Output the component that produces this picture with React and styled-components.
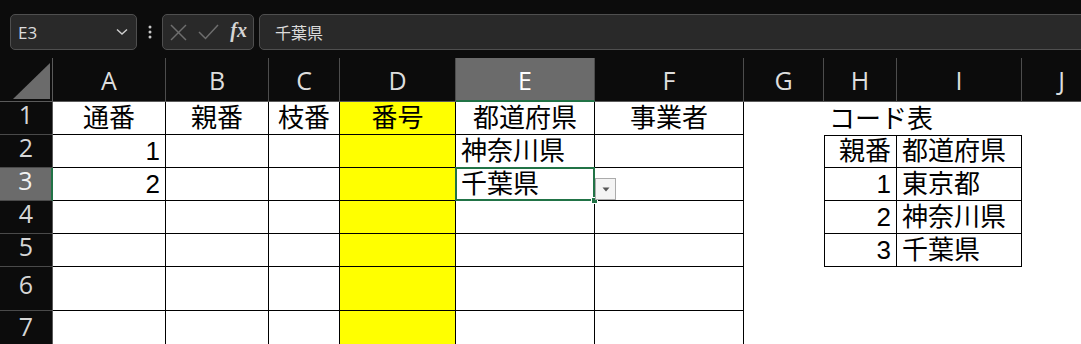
import styled, { createGlobalStyle, css } from "styled-components";

const GlobalStyle = createGlobalStyle`
  html, body {
    margin: 0;
    padding: 0;
    background: #0c0c0c;
    overflow: hidden;
  }
`;

const UI_FONT = `"Segoe UI", "Open Sans", "Noto Sans CJK JP", sans-serif`;
const CELL_FONT = `"Liberation Sans", "Noto Sans CJK JP", sans-serif`;

const Page = styled.div`
  width: 1081px;
  height: 344px;
  overflow: hidden;
  background: #0c0c0c;
`;

// ---- formula bar ----
const Toolbar = styled.div`
  height: 58px;
  box-sizing: border-box;
  padding: 14px 0 0 10px;
  display: flex;
  align-items: flex-start;
`;

const Box = styled.div`
  height: 36px;
  box-sizing: border-box;
  background: #292929;
  border: 1px solid #4f4f4f;
  border-radius: 5px;
  display: flex;
  align-items: center;
  color: #dcdcdc;
  font-family: ${UI_FONT};
`;

const NameBox = styled(Box)`
  width: 127px;
  padding: 0 8px 0 7px;
  justify-content: space-between;
  font-size: 17px;
`;

const Dots = styled.div`
  width: 25px;
  height: 36px;
  display: flex;
  align-items: center;
  justify-content: center;
`;

const FxBox = styled(Box)`
  width: 92px;
  padding: 0 6px 0 7px;
  justify-content: space-between;
`;

const Fx = styled.span`
  font-family: "Liberation Serif", serif;
  font-style: italic;
  font-weight: bold;
  font-size: 20px;
  color: #d4d4d4;
  margin-top: -3px;
`;

const FormulaInput = styled(Box)`
  flex: 1;
  margin-left: 5px;
  margin-right: -12px;
  padding-left: 15px;
  font-size: 16px;
`;

// ---- sheet grid ----
const COL_W = [53, 113, 103, 71, 116, 139, 149, 80, 73, 125, 80];
const ROW_H = [44, 33, 33, 33, 33, 33, 44, 40];

const Sheet = styled.div`
  display: grid;
  grid-template-columns: ${COL_W.map((w) => `${w}px`).join(" ")} 1fr;
  grid-template-rows: ${ROW_H.map((h) => `${h}px`).join(" ")};
`;

const Corner = styled.div`
  background: #0c0c0c;
  border-right: 1px solid #5a5a5a;
  border-bottom: 1px solid #5a5a5a;
  display: flex;
  align-items: flex-end;
  justify-content: flex-end;
  padding: 0 2px 2px 0;
`;

const ColHeader = styled.div`
  box-sizing: border-box;
  background: ${(p) => (p.$active ? "#6b6b6b" : "#0c0c0c")};
  border-right: 1px solid #4d4d4d;
  border-bottom: ${(p) => (p.$active ? "2px solid #217346" : "1px solid #5a5a5a")};
  color: ${(p) => (p.$active ? "#ffffff" : "#dedede")};
  font-family: ${UI_FONT};
  font-size: 25px;
  display: flex;
  align-items: center;
  justify-content: center;
  padding-top: ${(p) => (p.$active ? "1px" : "0")};
`;

const RowHeader = styled.div`
  box-sizing: border-box;
  background: ${(p) => (p.$active ? "#6b6b6b" : "#0c0c0c")};
  border-right: ${(p) => (p.$active ? "2px solid #217346" : "1px solid #5a5a5a")};
  border-bottom: 1px solid #4a4a4a;
  color: ${(p) => (p.$active ? "#f2f2f2" : "#d6d6d6")};
  font-family: ${UI_FONT};
  font-size: 25px;
  line-height: 1;
  display: flex;
  align-items: center;
  justify-content: center;
  padding-bottom: 8px;
`;

const Cell = styled.div`
  position: relative;
  box-sizing: border-box;
  background: ${(p) => p.$fill || "#ffffff"};
  color: #000;
  font-family: ${CELL_FONT};
  font-size: 26px;
  line-height: 26px;
  white-space: nowrap;
  display: flex;
  align-items: flex-end;
  padding: 0 5px 3px 5px;
  justify-content: ${(p) =>
    p.$align === "right" ? "flex-end" : p.$align === "center" ? "center" : "flex-start"};
  ${(p) => p.$span && css`grid-column: span ${p.$span};`}
  ${(p) =>
    p.$grid &&
    css`
      border-right: 1px solid #000;
      border-bottom: 1px solid #000;
    `}
  ${(p) => p.$left && css`border-left: 1px solid #000;`}
  ${(p) => p.$top && css`border-top: 1px solid #000;`}
  ${(p) =>
    p.$selected &&
    css`
      &::after {
        content: "";
        position: absolute;
        left: -1px;
        top: -1px;
        right: -1px;
        bottom: -1px;
        border: 2px solid #217346;
        pointer-events: none;
      }
    `}
`;

const FillHandle = styled.div`
  position: absolute;
  right: -4px;
  bottom: -4px;
  width: 5px;
  height: 5px;
  background: #217346;
  border: 1px solid #fff;
  z-index: 2;
`;

const DropButton = styled.div`
  position: absolute;
  left: calc(100% + 1px);
  bottom: 0px;
  width: 21px;
  height: 22px;
  box-sizing: border-box;
  background: #f4f4f4;
  border: 1px solid #ababab;
  display: flex;
  align-items: center;
  justify-content: center;
  z-index: 3;
`;

// ---- data ----
const LETTERS = ["A", "B", "C", "D", "E", "F", "G", "H", "I", "J"];

const CONTENT = {
  1: {
    A: ["通番", "center"],
    B: ["親番", "center"],
    C: ["枝番", "center"],
    D: ["番号", "center"],
    E: ["都道府県", "center"],
    F: ["事業者", "center"],
    H: ["コード表", "left", 2],
  },
  2: { A: ["1", "right"], E: ["神奈川県", "left"], H: ["親番", "right"], I: ["都道府県", "left"] },
  3: { A: ["2", "right"], E: ["千葉県", "left"], H: ["1", "right"], I: ["東京都", "left"] },
  4: { H: ["2", "right"], I: ["神奈川県", "left"] },
  5: { H: ["3", "right"], I: ["千葉県", "left"] },
};

const MAIN_COLS = ["A", "B", "C", "D", "E", "F"];

function Chevron() {
  return (
    <svg width="12" height="8" viewBox="0 0 12 8">
      <polyline points="1,1.5 6,6 11,1.5" fill="none" stroke="#cfcfcf" strokeWidth="1.4" />
    </svg>
  );
}

function SheetRow({ r }) {
  const data = CONTENT[r] || {};
  const cells = [];
  let skip = 0;
  LETTERS.forEach((c) => {
    if (skip > 0) {
      skip--;
      return;
    }
    const item = data[c];
    const inMain = MAIN_COLS.includes(c);
    const inCode = (c === "H" || c === "I") && r >= 2 && r <= 5;
    const selected = c === "E" && r === 3;
    if (item && item[2]) skip = item[2] - 1;
    cells.push(
      <Cell
        key={c}
        $grid={inMain || inCode}
        $left={inCode && c === "H"}
        $top={inCode && r === 2}
        $fill={c === "D" ? "#ffff00" : undefined}
        $align={item ? item[1] : "left"}
        $span={item ? item[2] : undefined}
        $selected={selected}
      >
        {item ? item[0] : ""}
        {selected && (
          <>
            <FillHandle />
            <DropButton>
              <svg width="8" height="5" viewBox="0 0 8 5">
                <polygon points="0.5,0.5 7.5,0.5 4,4.5" fill="#555" />
              </svg>
            </DropButton>
          </>
        )}
      </Cell>
    );
  });
  cells.push(<Cell key="rest" />);
  return (
    <>
      <RowHeader $active={r === 3}>{r}</RowHeader>
      {cells}
    </>
  );
}

export default function App() {
  return (
    <Page>
      <GlobalStyle />
      <Toolbar>
        <NameBox>
          <span>E3</span>
          <Chevron />
        </NameBox>
        <Dots>
          <svg width="4" height="14" viewBox="0 0 4 14">
            <circle cx="2" cy="2" r="1.5" fill="#c8c8c8" />
            <circle cx="2" cy="7" r="1.5" fill="#c8c8c8" />
            <circle cx="2" cy="12" r="1.5" fill="#c8c8c8" />
          </svg>
        </Dots>
        <FxBox>
          <svg width="17" height="17" viewBox="0 0 17 17">
            <line x1="1" y1="1" x2="16" y2="16" stroke="#6e6e6e" strokeWidth="1.5" />
            <line x1="16" y1="1" x2="1" y2="16" stroke="#6e6e6e" strokeWidth="1.5" />
          </svg>
          <svg width="21" height="16" viewBox="0 0 21 16">
            <polyline points="1,8 7.5,14.5 20,1" fill="none" stroke="#6e6e6e" strokeWidth="1.5" />
          </svg>
          <Fx>fx</Fx>
        </FxBox>
        <FormulaInput>千葉県</FormulaInput>
      </Toolbar>
      <Sheet>
        <Corner>
          <svg width="37" height="36" viewBox="0 0 37 36">
            <polygon points="37,0 37,36 0,36" fill="#6b6b6b" />
          </svg>
        </Corner>
        {LETTERS.map((c) => (
          <ColHeader key={c} $active={c === "E"}>
            {c}
          </ColHeader>
        ))}
        <ColHeader />
        {[1, 2, 3, 4, 5, 6, 7].map((r) => (
          <SheetRow key={r} r={r} />
        ))}
      </Sheet>
    </Page>
  );
}
